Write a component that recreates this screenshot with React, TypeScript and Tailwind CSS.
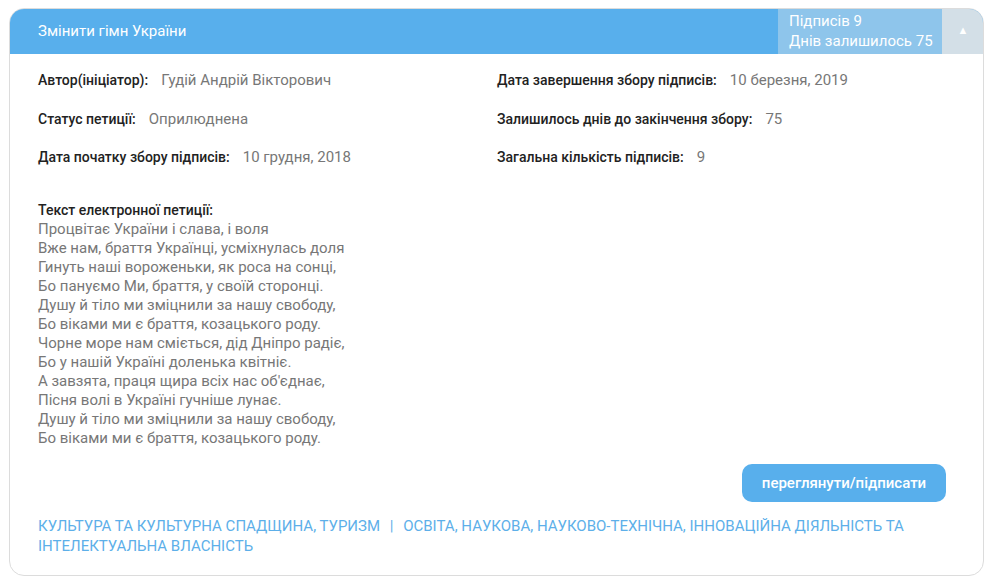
const INFO_LEFT = [
  { label: "Автор(ініціатор):", value: "Гудій Андрій Вікторович" },
  { label: "Статус петиції:", value: "Оприлюднена" },
  { label: "Дата початку збору підписів:", value: "10 грудня, 2018" },
];

const INFO_RIGHT = [
  { label: "Дата завершення збору підписів:", value: "10 березня, 2019" },
  { label: "Залишилось днів до закінчення збору:", value: "75" },
  { label: "Загальна кількість підписів:", value: "9" },
];

const POEM = [
  "Процвітає України і слава, і воля",
  "Вже нам, браття Українці, усміхнулась доля",
  "Гинуть наші вороженьки, як роса на сонці,",
  "Бо пануємо Ми, браття, у своїй сторонці.",
  "Душу й тіло ми зміцнили за нашу свободу,",
  "Бо віками ми є браття, козацького роду.",
  "Чорне море нам сміється, дід Дніпро радіє,",
  "Бо у нашій Україні доленька квітніє.",
  "А завзята, праця щира всіх нас об'єднає,",
  "Пісня волі в Україні гучніше лунає.",
  "Душу й тіло ми зміцнили за нашу свободу,",
  "Бо віками ми є браття, козацького роду.",
];

function InfoRow({ label, value }: { label: string; value: string }) {
  return (
    <div className="flex h-5 items-center leading-5">
      <span className="text-[14px] font-medium text-[#222]">{label}</span>
      <span className="ml-[13px] text-[15px] text-[#777]">{value}</span>
    </div>
  );
}

export default function App() {
  return (
    <div className="min-h-[583px] bg-white pl-[9px] pt-[8px] font-['Roboto',sans-serif]">
      <div className="w-[975px] overflow-hidden rounded-[15px] border border-[#dcdcdc] bg-white">
        <div className="-mx-px -mt-px flex h-[46px] bg-[#58afec] text-white">
          <div className="flex flex-1 items-center pl-[29px] text-[15px]">Змінити гімн України</div>
          <div className="flex w-[164px] flex-col justify-center bg-[#8ec5eb] pl-[11px] text-[15px] leading-5">
            <span>Підписів 9</span>
            <span>Днів залишилось 75</span>
          </div>
          <div className="flex w-[42px] items-center justify-center bg-[#d3dfe7] text-[11px]">▲</div>
        </div>

        <div className="pb-[19px] pl-[28px] pr-[37px]">
          <div className="grid grid-cols-[459px_1fr] pt-[16px]">
            <div className="flex flex-col gap-[18.5px]">
              {INFO_LEFT.map((r) => (
                <InfoRow key={r.label} {...r} />
              ))}
            </div>
            <div className="flex flex-col gap-[18.5px]">
              {INFO_RIGHT.map((r) => (
                <InfoRow key={r.label} {...r} />
              ))}
            </div>
          </div>

          <div className="mt-[34px] text-[15px] leading-[19px] text-[#777]">
            <p className="text-[14px] font-medium text-[#222]">Текст електронної петиції:</p>
            {POEM.map((line, i) => (
              <p key={i}>{line}</p>
            ))}
          </div>

          <div className="mt-[16px] flex justify-end">
            <button
              type="button"
              className="h-[38px] w-[204px] rounded-[10px] bg-[#58afec] text-[15px] font-medium text-white"
            >
              переглянути/підписати
            </button>
          </div>

          <div className="mt-[14px] text-[15px] leading-5 text-[#5dafe9]">
            КУЛЬТУРА ТА КУЛЬТУРНА СПАДЩИНА, ТУРИЗМ <span className="mx-[6px]">|</span> ОСВІТА, НАУКОВА,
            НАУКОВО-ТЕХНІЧНА, ІННОВАЦІЙНА ДІЯЛЬНІСТЬ ТА
            <br />
            ІНТЕЛЕКТУАЛЬНА ВЛАСНІСТЬ
          </div>
        </div>
      </div>
    </div>
  );
}
